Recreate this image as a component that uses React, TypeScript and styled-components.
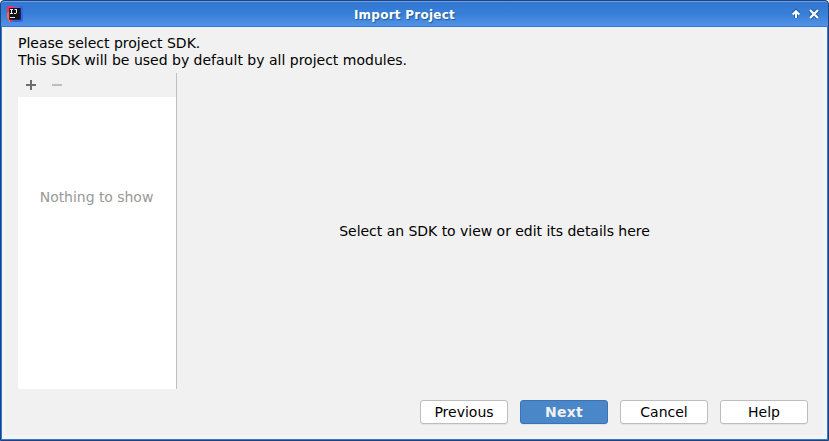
import React from "react";
import styled, { createGlobalStyle } from "styled-components";

const GlobalStyle = createGlobalStyle`
  *, *::before, *::after { box-sizing: border-box; }
  html, body { margin: 0; padding: 0; background: #fff; overflow: hidden; }
  body { font-family: "DejaVu Sans", sans-serif; font-size: 14px; color: #000; }
`;

const Window = styled.div`
  width: 829px;
  height: 441px;
  display: flex;
  flex-direction: column;
  border: 1px solid #1d427c;
  border-radius: 4px 4px 0 0;
  overflow: hidden;
  background: #1d427c;
`;

const TitleBar = styled.header`
  height: 26px;
  flex: none;
  display: grid;
  grid-template-columns: 22px 1fr 40px;
  align-items: center;
  padding: 0 8px 0 6px;
  border-top: 1px solid #6ba0e6;
  border-bottom: 1px solid #3079d6;
  border-radius: 3px 3px 0 0;
  background: linear-gradient(#3277d1, #377fd8 50%, #5292e4);
`;

const Title = styled.h1`
  margin: 0;
  padding-top: 1px;
  font-size: 12px;
  line-height: 16px;
  font-weight: bold;
  letter-spacing: 0.25px;
  text-align: center;
  color: #fff;
  text-shadow: 1px 1px 1px #24579c;
`;

const AppIcon = styled.svg`
  display: block;
  width: 16px;
  height: 16px;
`;

const Controls = styled.div`
  display: flex;
  justify-content: flex-end;
  gap: 6px;
`;

const ControlIcon = styled.svg`
  display: block;
  width: 12px;
  height: 12px;
`;

const Content = styled.main`
  flex: 1;
  display: flex;
  flex-direction: column;
  padding: 8px 15px 10px 16px;
  border: solid #3079d6;
  border-width: 0 1px 1px;
  background: #f1f1f1;
  box-shadow: inset 4px 0 #f4f4f4, inset -4px 0 #f4f4f4, inset 0 -4px #f4f4f4;
`;

const Message = styled.p`
  margin: 0;
  line-height: 17px;
  white-space: pre-line;
`;

const Split = styled.section`
  height: 316px;
  margin-top: 4px;
  display: grid;
  grid-template-columns: 159px 1fr;
`;

const SdkPane = styled.aside`
  display: flex;
  flex-direction: column;
  border-right: 1px solid #bfbfbf;
`;

const Toolbar = styled.div`
  height: 24px;
  display: flex;
  align-items: center;
  gap: 10px;
  padding-left: 5px;
`;

const ToolIcon = styled.svg`
  display: block;
  width: 16px;
  height: 16px;
`;

const EmptyList = styled.div`
  flex: 1;
  padding: 92px 1px 0 0;
  line-height: 17px;
  text-align: center;
  letter-spacing: -0.04px;
  color: #999;
  background: #fff;
`;

const Details = styled.div`
  display: flex;
  align-items: center;
  justify-content: center;
  letter-spacing: -0.03px;
`;

const Footer = styled.footer`
  display: flex;
  justify-content: flex-end;
  gap: 12px;
  margin-top: 11px;
  padding-right: 4px;
`;

const Button = styled.button<{ $primary?: boolean }>`
  width: 88px;
  height: 24px;
  padding: 0;
  border: 1px solid ${(p) => (p.$primary ? "#3c72b5" : "#bdbdbd")};
  border-radius: 3px;
  background: ${(p) => (p.$primary ? "#4a87c8" : "#fff")};
  color: ${(p) => (p.$primary ? "#f0f0f0" : "#000")};
  box-shadow: 0 1px ${(p) => (p.$primary ? "#dfe4ea" : "#e5e5e5")};
  font: ${(p) => (p.$primary ? "bold" : "normal")} 14px/20px "DejaVu Sans", sans-serif;
  letter-spacing: ${(p) => (p.$primary ? "0.3px" : "normal")};
`;

export default function App() {
  return (
    <>
      <GlobalStyle />
      <Window>
        <TitleBar>
          <AppIcon viewBox="0 0 16 16">
            <path d="M5 0h11v15l-2 1H5z" fill="#2f65e8" />
            <path d="M0 0h7l2 4-4 12H2L0 11z" fill="#ef3163" />
            <path d="M0 7l3-2v11H2L0 11z" fill="#f06a55" />
            <path d="M6 0h4l4 2H7z" fill="#7a5bd0" />
            <rect x="2.3" y="2" width="11.4" height="11.8" fill="#131118" />
            <path d="M3 3.5h3M4.5 3v5M3 7.5h3" fill="none" stroke="#eee" />
            <path d="M7.5 3.5H10M9.5 3v4l-.5.5H7" fill="none" stroke="#eee" />
            <path d="M3 11.5h5" stroke="#ddd" />
          </AppIcon>
          <Title>Import Project</Title>
          <Controls>
            <ControlIcon viewBox="0 0 12 12">
              <path d="M6 10V4M3 6l3-3 3 3" fill="none" stroke="#17498e" strokeWidth="4" opacity=".65" />
              <path d="M6 10V4M2.7 6.5L6 3.2l3.3 3.3" fill="none" stroke="#fff" strokeWidth="2" />
            </ControlIcon>
            <ControlIcon viewBox="0 0 12 12">
              <path d="M2 2l8 8M10 2l-8 8" fill="none" stroke="#17498e" strokeWidth="4" opacity=".65" />
              <path d="M2 2l8 8M10 2l-8 8" fill="none" stroke="#fff" strokeWidth="2.2" />
            </ControlIcon>
          </Controls>
        </TitleBar>
        <Content>
          <Message>{"Please select project SDK.\nThis SDK will be used by default by all project modules."}</Message>
          <Split>
            <SdkPane>
              <Toolbar>
                <ToolIcon viewBox="0 0 16 16">
                  <path d="M3 8h10M8 3v10" stroke="#6e6e6e" strokeWidth="2" shapeRendering="crispEdges" />
                </ToolIcon>
                <ToolIcon viewBox="0 0 16 16">
                  <path d="M3 8h10" stroke="#bdbdbd" strokeWidth="2" shapeRendering="crispEdges" />
                </ToolIcon>
              </Toolbar>
              <EmptyList>Nothing to show</EmptyList>
            </SdkPane>
            <Details>Select an SDK to view or edit its details here</Details>
          </Split>
          <Footer>
            <Button>Previous</Button>
            <Button $primary>Next</Button>
            <Button>Cancel</Button>
            <Button>Help</Button>
          </Footer>
        </Content>
      </Window>
    </>
  );
}
